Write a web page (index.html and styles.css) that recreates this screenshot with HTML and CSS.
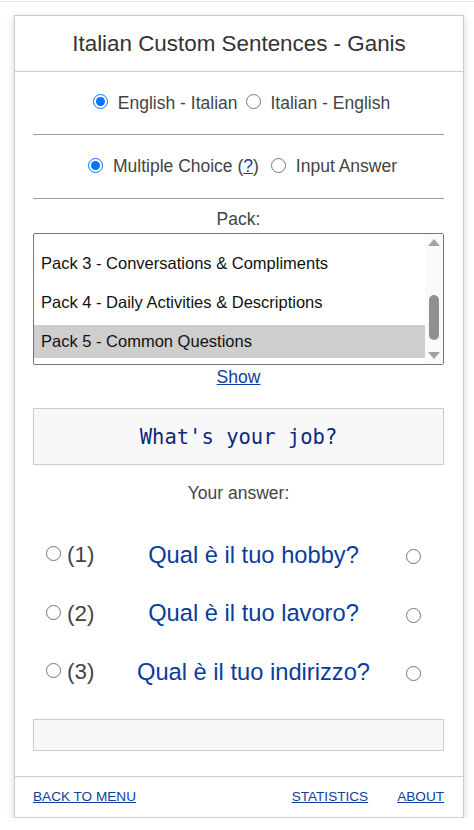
FILE: index.html
```html
<!DOCTYPE html>
<html lang="en">
<head>
<meta charset="utf-8">
<title>Italian Custom Sentences - Ganis</title>
<link rel="stylesheet" href="styles.css">
</head>
<body>
<div class="topline"></div>
<main class="card">
  <header class="card-head">
    <h1 class="title">Italian Custom Sentences - Ganis</h1>
  </header>
  <section class="card-body">
    <div class="choice-row">
      <label class="opt"><input class="radio" type="radio" name="dir" checked>English - Italian</label>
      <label class="opt opt-next"><input class="radio" type="radio" name="dir">Italian - English</label>
    </div>
    <hr class="rule">
    <div class="choice-row choice-row-2">
      <label class="opt"><input class="radio" type="radio" name="mode" checked>Multiple Choice (<a class="link" href="#">?</a>)</label>
      <label class="opt opt-next"><input class="radio" type="radio" name="mode">Input Answer</label>
    </div>
    <hr class="rule">
    <div class="pack-label">Pack:</div>
    <div class="listbox">
      <div class="list">
        <div class="option">Pack 3 - Conversations &amp; Compliments</div>
        <div class="option">Pack 4 - Daily Activities &amp; Descriptions</div>
        <div class="option selected">Pack 5 - Common Questions</div>
      </div>
      <div class="scrollbar">
        <span class="arrow arrow-up"></span>
        <div class="track"><div class="thumb"></div></div>
        <span class="arrow arrow-down"></span>
      </div>
    </div>
    <div class="show-row"><a class="link" href="#">Show</a></div>
    <div class="question">What's your job?</div>
    <div class="answer-label">Your answer:</div>
    <div class="answers">
      <div class="answer-row">
        <label class="num"><input class="radio radio-small" type="radio" name="ans">(1)</label>
        <span class="sentence">Qual è il tuo hobby?</span>
        <span class="right-cell"><input class="radio radio-small" type="radio" name="ans2"></span>
      </div>
      <div class="answer-row">
        <label class="num"><input class="radio radio-small" type="radio" name="ans">(2)</label>
        <span class="sentence">Qual è il tuo lavoro?</span>
        <span class="right-cell"><input class="radio radio-small" type="radio" name="ans2"></span>
      </div>
      <div class="answer-row">
        <label class="num"><input class="radio radio-small" type="radio" name="ans">(3)</label>
        <span class="sentence">Qual è il tuo indirizzo?</span>
        <span class="right-cell"><input class="radio radio-small" type="radio" name="ans2"></span>
      </div>
    </div>
    <div class="result"></div>
  </section>
  <footer class="card-foot">
    <a class="foot-link" href="#">BACK TO MENU</a>
    <nav class="foot-right">
      <a class="foot-link" href="#">STATISTICS</a>
      <a class="foot-link" href="#">ABOUT</a>
    </nav>
  </footer>
</main>
</body>
</html>
```
FILE: styles.css
```css
html, body {
  margin: 0;
  padding: 0;
  background: #fff;
}
body {
  font-family: "Liberation Sans", Arial, sans-serif;
  color: #444;
}
.topline {
  height: 1px;
  margin-top: 1px;
  background: #e6e6e6;
}
.card {
  width: 448px;
  margin: 13px 0 0 14px;
  border: 1px solid #ccc;
  background: #fff;
  box-shadow: 0 2px 8px rgba(0, 0, 0, 0.16);
}
.card-head {
  height: 55px;
  border-bottom: 1px solid #ccc;
  display: flex;
  align-items: center;
  justify-content: center;
}
.title {
  margin: 0;
  font-weight: normal;
  font-size: 22.4px;
  color: #333;
}
.card-body {
  padding: 0 19px 25px 18px;
}
.choice-row {
  height: 62px;
  display: flex;
  align-items: center;
  justify-content: center;
  padding-left: 6px;
  font-size: 17.5px;
  color: #444;
}
.choice-row-2 {
  height: 63px;
  padding-left: 8px;
}
.opt {
  display: flex;
  align-items: center;
}
.opt-next {
  margin-left: 8px;
}
.choice-row-2 .opt-next {
  margin-left: 12px;
}
.radio {
  width: 15px;
  height: 15px;
  margin: 0 10px 3px 0;
}
.rule {
  margin: 0;
  height: 0;
  border: 0;
  border-top: 1px solid #9a9a9a;
}
.pack-label {
  padding-top: 10px;
  margin-bottom: 4px;
  line-height: 20px;
  text-align: center;
  font-size: 17.5px;
  color: #444;
}
.listbox {
  height: 132px;
  box-sizing: border-box;
  border: 1px solid #767676;
  border-radius: 2px;
  display: flex;
  overflow: hidden;
}
.list {
  flex: 1;
  min-width: 0;
  padding-top: 13px;
  display: flex;
  flex-direction: column;
  gap: 6px;
  overflow: hidden;
}
.option {
  flex-shrink: 0;
  height: 33px;
  line-height: 33px;
  padding-left: 7px;
  font-size: 16.5px;
  color: #111;
  white-space: nowrap;
}
.option.selected {
  background: #cecece;
}
.scrollbar {
  width: 18px;
  display: flex;
  flex-direction: column;
  background: #fafafa;
}
.arrow {
  height: 17px;
  display: flex;
  align-items: center;
  justify-content: center;
}
.arrow-up::before {
  content: "";
  border-left: 6px solid transparent;
  border-right: 6px solid transparent;
  border-bottom: 7px solid #a3a3a3;
}
.arrow-down::before {
  content: "";
  border-left: 6px solid transparent;
  border-right: 6px solid transparent;
  border-top: 7px solid #a3a3a3;
}
.track {
  flex: 1;
  padding-top: 44px;
}
.thumb {
  width: 10px;
  height: 45px;
  margin: 0 auto;
  border-radius: 5px;
  background: #8f8f8f;
}
.show-row {
  padding-top: 2px;
  line-height: 20px;
  text-align: center;
  font-size: 17.5px;
}
.link {
  color: #0e3fa0;
  text-decoration: underline;
}
.question {
  margin-top: 21px;
  height: 57px;
  box-sizing: border-box;
  border: 1px solid #ccc;
  background: #f8f8f8;
  display: flex;
  align-items: center;
  justify-content: center;
  font-family: "DejaVu Sans Mono", monospace;
  font-size: 20.5px;
  color: #0d2a7a;
}
.answer-label {
  margin-top: 18px;
  line-height: 20px;
  text-align: center;
  font-size: 17.5px;
  color: #444;
}
.answers {
  margin-top: 23px;
}
.answer-row {
  height: 58.5px;
  display: grid;
  grid-template-columns: 67px 1fr 37px;
  align-items: center;
}
.num {
  display: flex;
  align-items: center;
  padding-left: 13px;
  font-size: 22.4px;
  color: #444;
}
.radio-small {
  width: 15px;
  height: 15px;
  margin: 0 6px 3px 0;
  flex-shrink: 0;
}
.sentence {
  text-align: center;
  font-size: 23.7px;
  color: #0a3c9e;
  white-space: nowrap;
}
.right-cell {
  display: flex;
  align-items: center;
  padding-top: 3px;
}
.right-cell .radio-small {
  margin: 0 0 0 -1px;
}
.result {
  margin-top: 17.5px;
  height: 32px;
  box-sizing: border-box;
  border: 1px solid #ccc;
  background: #f8f8f8;
}
.card-foot {
  height: 40px;
  border-top: 1px solid #ccc;
  padding: 0 19px 0 18px;
  display: flex;
  align-items: center;
  justify-content: space-between;
}
.foot-right {
  display: flex;
  gap: 29px;
}
.foot-link {
  font-size: 13.6px;
  color: #0e3fa0;
  text-decoration: underline;
  margin-top: -2px;
}
```
